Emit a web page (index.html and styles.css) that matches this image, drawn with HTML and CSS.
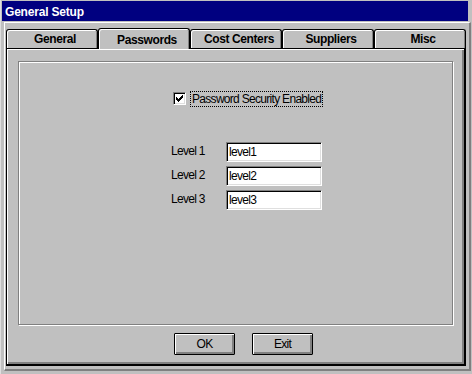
FILE: index.html
```html
<!DOCTYPE html>
<html>
<head>
<meta charset="utf-8">
<link rel="stylesheet" href="styles.css">
</head>
<body>
<div class="window">
  <div class="titlebar">General Setup</div>
  <div class="client">
    <div class="tabs">
      <div class="tab">General</div>
      <div class="tab active">Passwords</div>
      <div class="tab">Cost Centers</div>
      <div class="tab">Suppliers</div>
      <div class="tab">Misc</div>
    </div>
    <div class="panel">
      <div class="group">
        <div class="check-row">
          <span class="checkbox">
            <svg width="7" height="7" viewBox="0 0 7 7" shape-rendering="crispEdges">
              <rect x="6" y="0" width="1" height="3" fill="#000"/>
              <rect x="5" y="1" width="1" height="3" fill="#000"/>
              <rect x="4" y="2" width="1" height="3" fill="#000"/>
              <rect x="3" y="3" width="1" height="3" fill="#000"/>
              <rect x="2" y="4" width="1" height="3" fill="#000"/>
              <rect x="1" y="3" width="1" height="3" fill="#000"/>
              <rect x="0" y="2" width="1" height="3" fill="#000"/>
            </svg>
          </span>
          <span class="check-label">Password Security Enabled</span>
        </div>
        <div class="levels">
          <span class="level-label">Level 1</span><div class="field">level1</div>
          <span class="level-label">Level 2</span><div class="field">level2</div>
          <span class="level-label">Level 3</span><div class="field">level3</div>
        </div>
      </div>
      <div class="buttons">
        <button class="btn">OK</button>
        <button class="btn">Exit</button>
      </div>
    </div>
  </div>
</div>
</body>
</html>
```

FILE: styles.css
```css
html, body {
  margin: 0;
  padding: 0;
  background: #c0c0c0;
}

.window {
  width: 472px;
  height: 374px;
  box-sizing: border-box;
  padding: 1px 1px 3px 2px;
  background: #c0c0c0;
  font-family: "Liberation Sans", Arial, sans-serif;
  font-size: 12px;
  color: #000;
  box-shadow: inset 1px 0 0 #dfdfdf;
}

.titlebar {
  width: 466px;
  height: 20px;
  box-sizing: border-box;
  padding: 2px 0 0 3px;
  line-height: 18px;
  background: #000080;
  color: #fff;
  font-weight: bold;
  letter-spacing: -0.2px;
}

.client {
  margin: 1px 0 0 2px;
  width: 467px;
  height: 349px;
  box-sizing: border-box;
  border-style: solid;
  border-width: 1px 2px 2px 1px;
  border-color: #fff #808080 #808080 #fff;
  padding: 5px 3px 3px 1px;
}

.tabs {
  display: flex;
  height: 20px;
  align-items: flex-end;
  position: relative;
  z-index: 1;
}

.tab {
  width: 92px;
  height: 19px;
  box-sizing: border-box;
  border: 1px solid #000;
  border-bottom: none;
  border-radius: 3px 3px 0 0;
  box-shadow: inset 1px 1px 0 #fff, inset -1px 0 0 #808080;
  padding: 2px 0 0 6px;
  line-height: 14px;
  text-align: center;
  font-weight: bold;
  letter-spacing: -0.4px;
  background: #c0c0c0;
}

.tab.active {
  height: 21px;
  margin-bottom: -1px;
  padding-top: 4px;
}

.panel {
  width: 460px;
  height: 318px;
  box-sizing: border-box;
  border-style: solid;
  border-color: #000;
  border-width: 1px 2px 2px 1px;
  box-shadow: inset 1px 1px 0 #fff, inset -2px -2px 0 #808080;
  padding: 1px 0 0 1px;
}

.group {
  margin: 11px 0 0 10px;
  width: 435px;
  height: 264px;
  box-sizing: border-box;
  border: 1px solid #808080;
  box-shadow: inset 1px 1px 0 #fff, 1px 1px 0 #fff;
  padding-top: 29px;
  padding-left: 154px;
}

.check-row {
  display: flex;
  align-items: flex-start;
  height: 16px;
  letter-spacing: -0.7px;
}

.checkbox {
  width: 13px;
  height: 13px;
  margin-top: 1px;
  box-sizing: border-box;
  border: 1px solid;
  border-color: #808080 #fff #fff #808080;
  box-shadow: inset 1px 1px 0 #000, inset -1px -1px 0 #dfdfdf;
  background: #fff;
  display: flex;
  padding: 2px 0 0 2px;
}

.checkbox svg {
  display: block;
}

.check-label {
  margin-left: 4px;
  border: 1px dotted #000;
  padding: 0 1px;
  line-height: 14px;
  white-space: nowrap;
}

.levels {
  display: grid;
  grid-template-columns: 55px 96px;
  row-gap: 4px;
  margin: 35px 0 0 -2px;
  letter-spacing: -0.7px;
}

.level-label {
  padding-top: 2px;
  line-height: 14px;
}

.field {
  height: 20px;
  box-sizing: border-box;
  border: 1px solid;
  border-color: #808080 #fff #fff #808080;
  box-shadow: inset 1px 1px 0 #000, inset -1px -1px 0 #dfdfdf;
  background: #fff;
  padding: 1px 0 0 2px;
  line-height: 16px;
}

.buttons {
  display: flex;
  gap: 17px;
  margin: 8px 0 0 166px;
}

.btn {
  width: 61px;
  height: 22px;
  box-sizing: border-box;
  border: 1px solid #000;
  border-radius: 1px;
  background: #c0c0c0;
  box-shadow: inset 1px 1px 0 #fff, inset -2px -2px 0 #808080;
  font-family: "Liberation Sans", Arial, sans-serif;
  font-size: 12px;
  letter-spacing: -0.7px;
  color: #000;
  padding: 0;
  line-height: 18px;
}
```
